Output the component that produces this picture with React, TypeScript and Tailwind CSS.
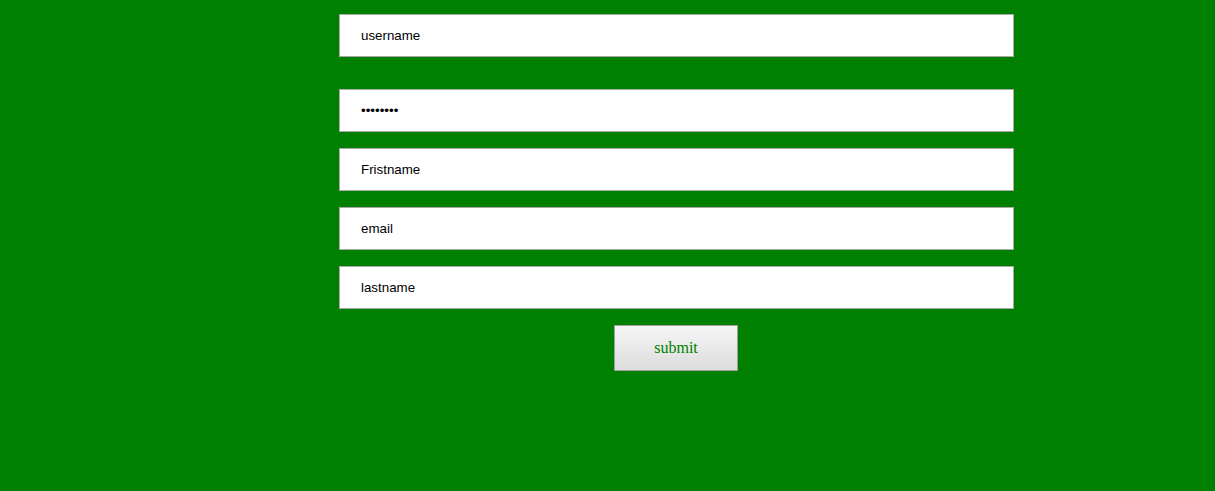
import React from 'react'

// Simple sign-up form on a green page.
const fields = [
  { value: 'Fristname', type: 'text' },
  { value: 'email', type: 'text' },
  { value: 'lastname', type: 'text' },
]

const inputCls =
  "block w-full h-[43px] border border-[#a9a9a9] bg-white pl-[21px] pb-px text-[13.33px] text-black outline-none font-['Liberation_Sans',Arial,sans-serif]"

export default function App() {
  return (
    <div className="min-h-screen w-full bg-[#008000]">
      <form className="ml-[339px] w-[675px] pt-[14px] flex flex-col" onSubmit={(e) => e.preventDefault()}>
        <input className={inputCls} defaultValue="username" readOnly />
        <div className="mt-[32px] flex flex-col gap-[16px]">
          <input className={inputCls} type="password" defaultValue="12345678" readOnly />
          {fields.map((f) => (
            <input key={f.value} className={inputCls} type={f.type} defaultValue={f.value} readOnly />
          ))}
        </div>
        <div className="mt-[16px] flex justify-center pr-px">
          <button
            type="submit"
            className="w-[124px] h-[46px] border border-[#a0a0a0] bg-gradient-to-b from-[#f6f6f6] to-[#dcdcdc] text-[16px] text-[#008000] font-['Liberation_Serif','Times_New_Roman',serif]"
          >
            submit
          </button>
        </div>
      </form>
    </div>
  )
}
